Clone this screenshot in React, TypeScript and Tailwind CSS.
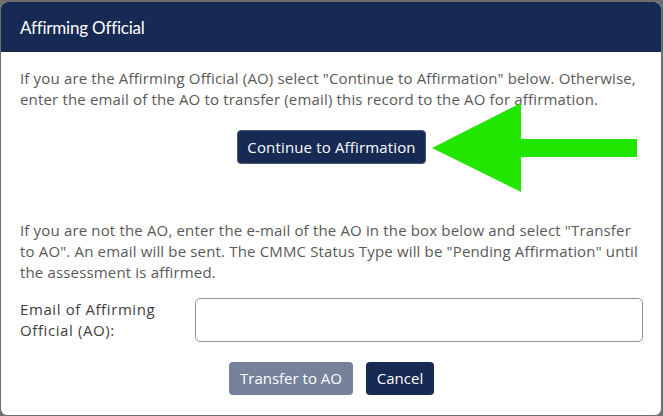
import React from "react";

export default function App() {
  return (
    <div className="w-[663px] h-[416px] bg-[#6e6e6e] pt-[2px] pl-[1px] pr-[2px] pb-[1px] overflow-hidden">
      <div
        className="relative w-full h-full bg-white rounded-[6px] overflow-hidden"
        style={{ fontFamily: '"Open Sans", "Liberation Sans", sans-serif' }}
      >
        <div className="h-[50px] bg-[#172a54] rounded-t-[6px] flex items-center pl-[19px]">
          <span
            className="text-white text-[17px] leading-none tracking-[-0.2px]"
            style={{ fontFamily: 'Lato, "Open Sans", sans-serif' }}
          >
            Affirming Official
          </span>
        </div>

        <div className="pl-[19px] pr-[18px] pt-[16px]">
          <p className="text-[15px] leading-[21px] text-[#595959] tracking-[0.16px]">
            If you are the Affirming Official (AO) select "Continue to Affirmation" below. Otherwise,
            enter the email of the AO to transfer (email) this record to the AO for affirmation.
          </p>

          <div className="flex justify-center mt-[20px]">
            <button className="h-[34px] w-[189px] rounded-[4px] bg-[#172a54] border border-[#4a5877] text-white text-[15px] tracking-[0.15px]">
              Continue to Affirmation
            </button>
          </div>

          <p className="mt-[56px] text-[15px] leading-[21px] text-[#595959] tracking-[0.16px]">
            If you are not the AO, enter the e-mail of the AO in the box below and select "Transfer
            to AO". An email will be sent. The CMMC Status Type will be "Pending Affirmation" until
            the assessment is affirmed.
          </p>

          <div className="mt-[15px] flex items-center">
            <label className="w-[175px] shrink-0 text-[15px] leading-[21px] text-[#404040] tracking-[0.6px]">
              Email of Affirming
              <br />
              Official (AO):
            </label>
            <input
              type="text"
              className="flex-1 min-w-0 h-[44px] rounded-[5px] border border-[#8c95a6] bg-white outline-none"
            />
          </div>

          <div className="mt-[20px] flex justify-center gap-[13px]">
            <button className="h-[33px] w-[124px] rounded-[4px] bg-[#76819a] text-white text-[15px]">
              Transfer to AO
            </button>
            <button className="h-[33px] w-[68px] rounded-[4px] bg-[#172a54] text-white text-[15px]">
              Cancel
            </button>
          </div>
        </div>

        <svg
          className="absolute left-0 top-0 pointer-events-none"
          width="660"
          height="414"
          viewBox="0 0 660 414"
        >
          <polygon
            points="431,146 520,101 520,137 636,137 636,155 520,155 520,190"
            fill="#22e600"
          />
        </svg>
      </div>
    </div>
  );
}
